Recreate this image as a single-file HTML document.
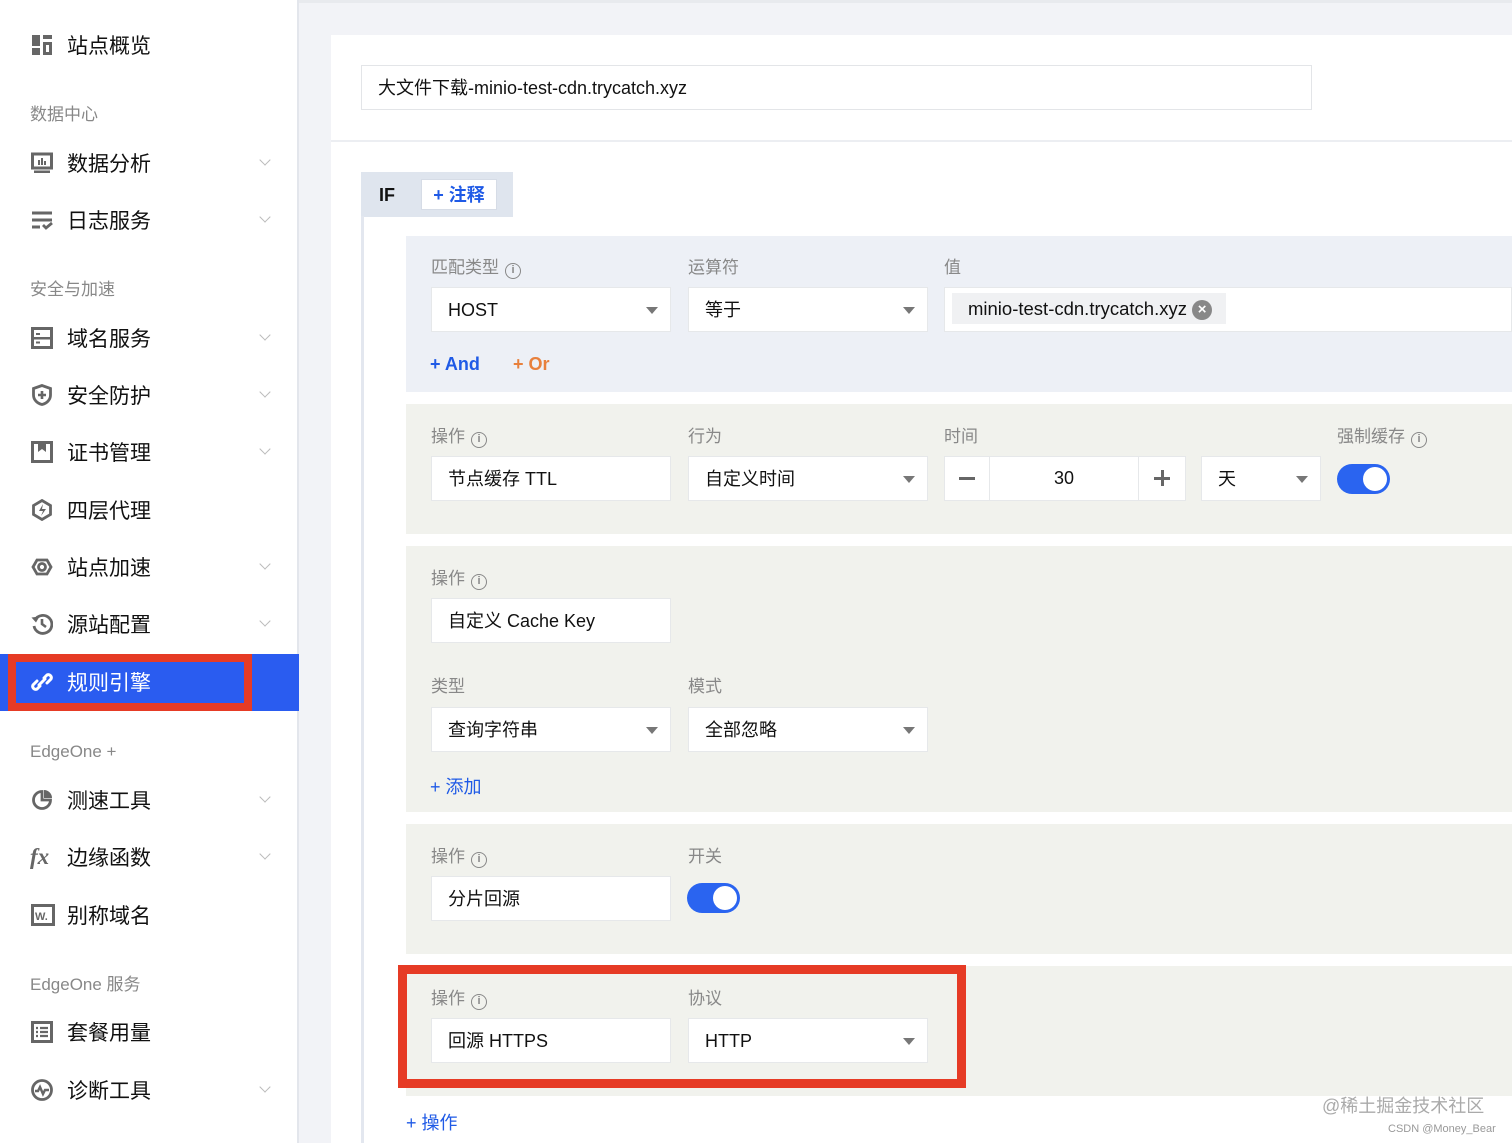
<!DOCTYPE html>
<html><head><meta charset="utf-8">
<style>
*{margin:0;padding:0;box-sizing:border-box}
body{width:1512px;height:1143px;overflow:hidden;background:#f2f3f7;font-family:"Liberation Sans","Noto Sans CJK SC",sans-serif;position:relative;color:#111}
.a{position:absolute}
#side{left:0;top:0;width:299px;height:1143px;background:#fff;border-right:2px solid #e3e6ec}
.it{position:absolute;left:67px;font-size:21px;color:#111;line-height:24px;margin-top:2px}
.ic{position:absolute;left:31px;width:22px;height:22px}
.sec{position:absolute;left:30px;font-size:17px;color:#888;line-height:20px;margin-top:1px}
.chev{position:absolute;left:261px;width:8px;height:8px;border-right:1.5px solid #bbb;border-bottom:1.5px solid #bbb;transform:rotate(45deg)}
.lab{position:absolute;font-size:17px;color:#888;line-height:20px;margin-top:1px}
.inp{position:absolute;background:#fff;border:1px solid #e6e8ea;height:45px;font-size:18px;line-height:43px;padding-left:16px;color:#111}
.tri{position:absolute;right:12px;top:19px;width:0;height:0;border-left:6px solid transparent;border-right:6px solid transparent;border-top:7px solid #777}
.info{display:inline-block;width:16px;height:16px;border:1.6px solid #888;border-radius:50%;font-size:11px;line-height:13px;text-align:center;color:#888;vertical-align:0px;margin-left:6px;font-weight:bold}
.pan{position:absolute;left:406px;right:0}
.g{background:#f1f2ed}
.tog{position:absolute;width:53px;height:30px;border-radius:15px;background:#2a64f0}
.tog:after{content:"";position:absolute;right:3px;top:3px;width:24px;height:24px;border-radius:50%;background:#fff}
.blue{color:#1f5ae6}
</style></head><body>
<div class="a" style="left:0;top:0;width:1512px;height:3px;background:#e8eaee"></div>
<div id="side" class="a">
<svg class="ic" style="top:34px" viewBox="0 0 22 22"><rect x="1" y="1" width="8" height="11" fill="#666"/><rect x="1" y="14" width="8" height="7" fill="#666"/><rect x="12" y="1" width="9" height="4" fill="#666"/><rect x="12" y="8" width="9" height="13" fill="#666"/><rect x="15" y="11" width="3" height="7" fill="#fff"/></svg>
<div class="it" style="top:33px">站点概览</div>
<div class="sec" style="top:104px">数据中心</div>
<svg class="ic" style="top:152px" viewBox="0 0 22 22"><rect x="1.5" y="2" width="19" height="14" fill="none" stroke="#666" stroke-width="3"/><rect x="3" y="18.5" width="16" height="2.5" fill="#666"/><rect x="7" y="8" width="2" height="5" fill="#666"/><rect x="10" y="6" width="2" height="7" fill="#666"/><rect x="13" y="9" width="2" height="4" fill="#666"/></svg>
<div class="it" style="top:151px">数据分析</div><div class="chev" style="top:156px"></div>
<svg class="ic" style="top:209px" viewBox="0 0 22 22"><rect x="1" y="2.5" width="20" height="3" fill="#666"/><rect x="1" y="9.5" width="20" height="3" fill="#666"/><rect x="1" y="16.5" width="8" height="3" fill="#666"/><path d="M12 16l3 3 6-5" stroke="#666" stroke-width="2.8" fill="none"/></svg>
<div class="it" style="top:208px">日志服务</div><div class="chev" style="top:213px"></div>
<div class="sec" style="top:279px">安全与加速</div>
<svg class="ic" style="top:327px" viewBox="0 0 22 22"><rect x="1.5" y="1.5" width="19" height="19" fill="none" stroke="#666" stroke-width="3"/><rect x="2" y="10" width="18" height="2.5" fill="#666"/><rect x="5" y="6" width="4" height="2" fill="#666"/><rect x="5" y="14.5" width="4" height="2" fill="#666"/></svg>
<div class="it" style="top:326px">域名服务</div><div class="chev" style="top:331px"></div>
<svg class="ic" style="top:384px" viewBox="0 0 22 22"><path d="M11 1.5L2.5 4.5v6.5c0 5 4 8.5 8.5 9.5 4.5-1 8.5-4.5 8.5-9.5V4.5z" fill="none" stroke="#666" stroke-width="2.8"/><path d="M11 7v8M7 11h8" stroke="#666" stroke-width="2.6"/></svg>
<div class="it" style="top:383px">安全防护</div><div class="chev" style="top:388px"></div>
<svg class="ic" style="top:441px" viewBox="0 0 22 22"><rect x="1.5" y="1.5" width="19" height="19" fill="none" stroke="#666" stroke-width="3"/><path d="M7 2v9l4-3 4 3V2" fill="#666"/></svg>
<div class="it" style="top:440px">证书管理</div><div class="chev" style="top:445px"></div>
<svg class="ic" style="top:499px" viewBox="0 0 22 22"><path d="M11 1.5l8.5 5v9l-8.5 5-8.5-5v-9z" fill="none" stroke="#666" stroke-width="2.8"/><path d="M12 5l-4 7h4l-2 5 5-7h-4z" fill="#666"/></svg>
<div class="it" style="top:498px">四层代理</div>
<svg class="ic" style="top:556px" viewBox="0 0 22 22"><path d="M2 11l4-7h10l4 7-4 7H6z" fill="none" stroke="#666" stroke-width="2.8"/><circle cx="11" cy="11" r="3.5" fill="none" stroke="#666" stroke-width="2.8"/></svg>
<div class="it" style="top:555px">站点加速</div><div class="chev" style="top:560px"></div>
<svg class="ic" style="top:613px" viewBox="0 0 22 22"><path d="M4 7a9 9 0 1 1-1 6" fill="none" stroke="#666" stroke-width="2.8"/><path d="M0.5 4.5l4.5 5 3.5-6z" fill="#666"/><path d="M11 6v5l4 3" stroke="#666" stroke-width="2.6" fill="none"/></svg>
<div class="it" style="top:612px">源站配置</div><div class="chev" style="top:617px"></div>
<div class="a" style="left:0;top:654px;width:299px;height:57px;background:#2a5cf0"></div>
<div class="a" style="left:8px;top:654px;width:244px;height:57px;border:8px solid #e63b25;background:#2a5cf0"></div>
<svg class="ic" style="top:671px" viewBox="0 0 22 22"><path d="M9 15l-3 3a3 3 0 0 1-4-4l4-4M13 7l3-3a3 3 0 0 1 4 4l-4 4M8 14l6-6" stroke="#fff" stroke-width="3" fill="none" stroke-linecap="round"/></svg>
<div class="it" style="top:670px;color:#fff">规则引擎</div>
<div class="sec" style="top:741px">EdgeOne +</div>
<svg class="ic" style="top:789px" viewBox="0 0 22 22"><path d="M11 2.5a8.5 8.5 0 1 0 8.5 8.5h-8.5z" fill="none" stroke="#666" stroke-width="2.8"/><path d="M13 1a8 8 0 0 1 8 8h-8z" fill="#666"/></svg>
<div class="it" style="top:788px">测速工具</div><div class="chev" style="top:793px"></div>
<div class="a" style="left:30px;top:844px;font-size:23px;font-style:italic;font-weight:bold;color:#666;font-family:'Liberation Serif',serif">fx</div>
<div class="it" style="top:845px">边缘函数</div><div class="chev" style="top:850px"></div>
<svg class="ic" style="top:904px;width:24px" viewBox="0 0 24 22"><rect x="1.5" y="1.5" width="21" height="19" fill="none" stroke="#666" stroke-width="3"/><text x="4" y="16" font-size="11" font-weight="bold" fill="#666" font-family="Liberation Sans">W.</text></svg>
<div class="it" style="top:903px">别称域名</div>
<div class="sec" style="top:974px">EdgeOne 服务</div>
<svg class="ic" style="top:1021px" viewBox="0 0 22 22"><rect x="1.5" y="1.5" width="19" height="19" fill="none" stroke="#666" stroke-width="3"/><path d="M5 7h2M9 7h8M5 11h2M9 11h8M5 15h2M9 15h8" stroke="#666" stroke-width="2.2"/></svg>
<div class="it" style="top:1020px">套餐用量</div>
<svg class="ic" style="top:1079px" viewBox="0 0 22 22"><circle cx="11" cy="11" r="9.5" fill="none" stroke="#666" stroke-width="2.8"/><path d="M4 12h3l2-4 3 7 2-4h4" stroke="#666" stroke-width="2.4" fill="none"/></svg>
<div class="it" style="top:1078px">诊断工具</div><div class="chev" style="top:1083px"></div>
</div>

<div class="a" style="left:331px;top:35px;width:1181px;height:1108px;background:#fff"></div>
<div class="a" style="left:361px;top:65px;width:951px;height:45px;border:1px solid #e3e5e8;font-size:18px;line-height:45px;padding-left:16px">大文件下载-minio-test-cdn.trycatch.xyz</div>
<div class="a" style="left:331px;top:140px;width:1181px;height:2px;background:#eceef2"></div>
<div class="a" style="left:361px;top:172px;width:152px;height:45px;background:#dfe5ee"></div>
<div class="a" style="left:379px;top:185px;font-size:18px;font-weight:bold">IF</div>
<div class="a blue" style="left:421px;top:179px;width:76px;height:31px;background:#fff;border:1px solid #d6dce6;font-size:18px;font-weight:bold;line-height:31px;text-align:center">+ 注释</div>
<div class="a" style="left:361px;top:216px;width:3px;height:927px;background:#e3e7ef"></div>

<div class="pan" style="top:236px;height:156px;background:#edf0f6"></div>
<div class="lab" style="left:431px;top:257px">匹配类型<span class="info">i</span></div>
<div class="lab" style="left:688px;top:257px">运算符</div>
<div class="lab" style="left:944px;top:257px">值</div>
<div class="inp" style="left:431px;top:287px;width:240px;line-height:45px">HOST<div class="tri"></div></div>
<div class="inp" style="left:688px;top:287px;width:240px;line-height:45px">等于<div class="tri"></div></div>
<div class="inp" style="left:944px;top:287px;width:568px;padding-left:7px"><span style="display:inline-block;background:#f0f1f3;height:31px;line-height:31px;padding:0 14px 0 16px;vertical-align:middle;margin-top:-3px;font-size:18.5px">minio-test-cdn.trycatch.xyz <span style="display:inline-block;width:20px;height:20px;border-radius:50%;background:#888;color:#fff;font-size:15px;line-height:20px;text-align:center;font-weight:bold;vertical-align:1px">×</span></span></div>
<div class="a blue" style="left:430px;top:354px;font-size:18px;font-weight:bold">+ And</div>
<div class="a" style="left:513px;top:354px;font-size:18px;font-weight:bold;color:#e8803c">+ Or</div>

<div class="pan g" style="top:404px;height:130px"></div>
<div class="lab" style="left:431px;top:426px">操作<span class="info">i</span></div>
<div class="lab" style="left:688px;top:426px">行为</div>
<div class="lab" style="left:944px;top:426px">时间</div>
<div class="lab" style="left:1337px;top:426px">强制缓存<span class="info">i</span></div>
<div class="inp" style="left:431px;top:456px;width:240px;line-height:45px">节点缓存 TTL</div>
<div class="inp" style="left:688px;top:456px;width:240px;line-height:45px">自定义时间<div class="tri"></div></div>
<div class="inp" style="left:944px;top:456px;width:242px;padding:0"></div>
<div class="a" style="left:959px;top:477px;width:16px;height:3px;background:#666"></div>
<div class="a" style="left:989px;top:457px;width:1px;height:43px;background:#e6e8ea"></div>
<div class="a" style="left:1138px;top:457px;width:1px;height:43px;background:#e6e8ea"></div>
<div class="a" style="left:990px;top:468px;width:148px;text-align:center;font-size:18px">30</div>
<div class="a" style="left:1154px;top:477px;width:16px;height:2.5px;background:#666"></div>
<div class="a" style="left:1161px;top:470px;width:2.5px;height:16px;background:#666"></div>
<div class="inp" style="left:1201px;top:456px;width:120px;line-height:45px">天<div class="tri"></div></div>
<div class="tog" style="left:1337px;top:464px"></div>

<div class="pan g" style="top:546px;height:266px"></div>
<div class="lab" style="left:431px;top:568px">操作<span class="info">i</span></div>
<div class="inp" style="left:431px;top:598px;width:240px;line-height:45px">自定义 Cache Key</div>
<div class="lab" style="left:431px;top:676px">类型</div>
<div class="lab" style="left:688px;top:676px">模式</div>
<div class="inp" style="left:431px;top:707px;width:240px;line-height:45px">查询字符串<div class="tri"></div></div>
<div class="inp" style="left:688px;top:707px;width:240px;line-height:45px">全部忽略<div class="tri"></div></div>
<div class="a blue" style="left:430px;top:773px;font-size:18px">+ 添加</div>

<div class="pan g" style="top:824px;height:130px"></div>
<div class="lab" style="left:431px;top:846px">操作<span class="info">i</span></div>
<div class="lab" style="left:688px;top:846px">开关</div>
<div class="inp" style="left:431px;top:876px;width:240px;line-height:45px">分片回源</div>
<div class="tog" style="left:687px;top:883px"></div>

<div class="pan g" style="top:966px;height:130px"></div>
<div class="a" style="left:398px;top:965px;width:568px;height:123px;border:9px solid #e63b25"></div>
<div class="lab" style="left:431px;top:988px">操作<span class="info">i</span></div>
<div class="lab" style="left:688px;top:988px">协议</div>
<div class="inp" style="left:431px;top:1018px;width:240px;line-height:45px">回源 HTTPS</div>
<div class="inp" style="left:688px;top:1018px;width:240px;line-height:45px">HTTP<div class="tri"></div></div>
<div class="a blue" style="left:406px;top:1109px;font-size:18px">+ 操作</div>

<div class="a" style="left:1322px;top:1092px;font-size:18px;color:#aaa">@稀土掘金技术社区</div>
<div class="a" style="left:1388px;top:1123px;font-size:11px;color:#999">CSDN @Money_Bear</div>
</body></html>
